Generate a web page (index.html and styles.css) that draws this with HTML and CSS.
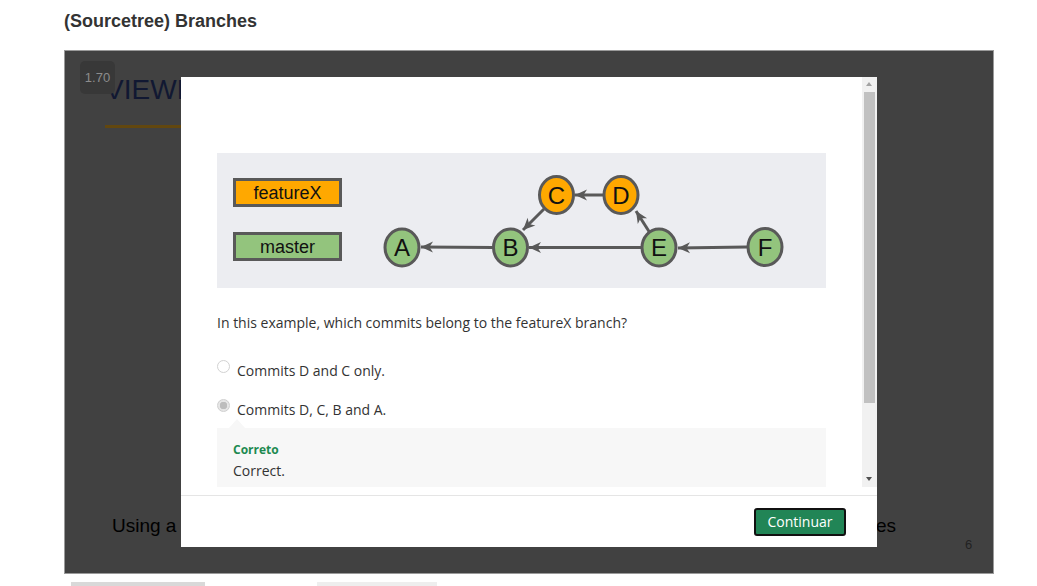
FILE: index.html
```html
<!DOCTYPE html>
<html>
<head>
<meta charset="utf-8">
<link rel="stylesheet" href="styles.css">
</head>
<body>
<div class="page">
  <h1 class="title">(Sourcetree) Branches</h1>
  <div class="frame">
    <div class="slide">
      <div class="badge">1.70</div>
      <div class="slide-title">VIEWING BRANCHES</div>
      <div class="slide-rule"></div>
      <div class="slide-text-left">Using a commit graph to view branches</div>
      <div class="slide-text-right">es</div>
      <div class="slide-num">6</div>
    </div>
    <div class="modal">
      <div class="modal-body">
        <div class="modal-content">
          <svg class="diagram" width="609" height="135" viewBox="0 0 609 135">
            <defs>
              <marker id="arr" markerUnits="userSpaceOnUse" markerWidth="14" markerHeight="12" refX="13" refY="6" orient="auto">
                <path d="M1,0.5 L13,6 L1,11.5 L4.5,6 Z" fill="#595959"/>
              </marker>
            </defs>
            <rect x="0" y="0" width="609" height="135" fill="#ecedf1"/>
            <rect x="17.5" y="26.5" width="106" height="26" fill="#ffa800" stroke="#595959" stroke-width="3"/>
            <text x="70.5" y="46" class="lbl">featureX</text>
            <rect x="17.5" y="80.5" width="106" height="26" fill="#93c47d" stroke="#595959" stroke-width="3"/>
            <text x="70.5" y="100" class="lbl">master</text>
            <g stroke="#595959" stroke-width="3" fill="none">
              <line x1="276" y1="94.5" x2="204" y2="94" marker-end="url(#arr)"/>
              <line x1="424" y1="94.5" x2="312" y2="94.5" marker-end="url(#arr)"/>
              <line x1="530" y1="94" x2="461" y2="95" marker-end="url(#arr)"/>
              <line x1="386" y1="42" x2="358" y2="42" marker-end="url(#arr)"/>
              <line x1="327" y1="56" x2="306" y2="77" marker-end="url(#arr)"/>
              <line x1="433" y1="80" x2="419" y2="58" marker-end="url(#arr)"/>
            </g>
            <g stroke="#595959" stroke-width="3">
              <ellipse cx="185" cy="94.5" rx="17" ry="18.5" fill="#93c47d"/>
              <ellipse cx="293.5" cy="94.5" rx="17" ry="18.5" fill="#93c47d"/>
              <ellipse cx="442" cy="94.5" rx="17" ry="18.5" fill="#93c47d"/>
              <ellipse cx="548" cy="94" rx="17" ry="18.5" fill="#93c47d"/>
              <ellipse cx="339.5" cy="42" rx="17" ry="18.5" fill="#ffa800"/>
              <ellipse cx="404" cy="42" rx="17" ry="18.5" fill="#ffa800"/>
            </g>
            <g class="node">
              <text x="185" y="103">A</text>
              <text x="293.5" y="103">B</text>
              <text x="442" y="103">E</text>
              <text x="548" y="102.5">F</text>
              <text x="339.5" y="50.5">C</text>
              <text x="404" y="50.5">D</text>
            </g>
          </svg>
          <p class="question">In this example, which commits belong to the featureX branch?</p>
          <div class="option">
            <span class="radio"></span>
            <span class="opt-text">Commits D and C only.</span>
          </div>
          <div class="option">
            <span class="radio checked"></span>
            <span class="opt-text">Commits D, C, B and A.</span>
          </div>
          <div class="feedback">
            <div class="fb-title">Correto</div>
            <div class="fb-text">Correct.</div>
          </div>
        </div>
        <div class="scrollbar">
          <div class="sb-up"></div>
          <div class="sb-thumb"></div>
          <div class="sb-space"></div>
          <div class="sb-down"></div>
        </div>
      </div>
      <div class="modal-footer">
        <button class="btn">Continuar</button>
      </div>
    </div>
  </div>
  <div class="bottom-bars">
    <div class="bar bar1"></div>
    <div class="bar bar2"></div>
  </div>
</div>
</body>
</html>
```

FILE: styles.css
```css
* { box-sizing: border-box; }
html, body { margin: 0; padding: 0; background: #fff; }
body { overflow: hidden; }
.page {
  padding: 10px 0 0 64px;
  width: 1037px;
  height: 586px;
}
.title {
  margin: 0;
  font-family: "Liberation Sans", Arial, sans-serif;
  font-weight: bold;
  font-size: 18px;
  line-height: 22px;
  color: #333;
}
.frame {
  position: relative;
  margin-top: 18px;
  width: 930px;
  height: 524px;
  border: 1px solid #9a9a9a;
  background: #414141;
  overflow: hidden;
}
.slide {
  position: absolute;
  inset: 0;
  font-family: "Liberation Sans", Arial, sans-serif;
}
.badge {
  position: absolute;
  left: 15px;
  top: 10px;
  width: 35px;
  height: 33px;
  border-radius: 5px;
  background: #383838;
  color: #8c8c8c;
  font-size: 13px;
  line-height: 33px;
  text-align: center;
  z-index: 1;
}
.slide-title {
  position: absolute;
  left: 40px;
  top: 23px;
  font-size: 28px;
  line-height: 32px;
  color: #111832;
  white-space: nowrap;
}
.slide-rule {
  position: absolute;
  left: 40px;
  top: 74px;
  width: 300px;
  height: 3px;
  background: #62470f;
}
.slide-text-left {
  position: absolute;
  left: 47px;
  top: 464px;
  font-size: 19px;
  line-height: 22px;
  color: #000;
  white-space: nowrap;
}
.slide-text-right {
  position: absolute;
  left: 811px;
  top: 464px;
  font-size: 19px;
  line-height: 22px;
  color: #000;
}
.slide-num {
  position: absolute;
  left: 900px;
  top: 486px;
  font-size: 13px;
  line-height: 16px;
  color: #222;
}
.modal {
  position: absolute;
  left: 116px;
  top: 26px;
  width: 696px;
  height: 470px;
  background: #fff;
  display: flex;
  flex-direction: column;
  font-family: "Open Sans", sans-serif;
  color: #333;
  z-index: 2;
}
.modal-body {
  display: flex;
  height: 410px;
  margin-bottom: 8px;
  overflow: hidden;
}
.modal-content {
  flex: 1;
  padding: 76px 36px 0 36px;
  overflow: hidden;
}
.diagram { display: block; }
.lbl {
  font-family: "Liberation Sans", Arial, sans-serif;
  font-size: 18px;
  text-anchor: middle;
  fill: #111;
}
.node text {
  font-family: "Liberation Sans", Arial, sans-serif;
  font-size: 24px;
  text-anchor: middle;
  fill: #111;
}
.question {
  margin: 25px 0 0 0;
  font-size: 14px;
  line-height: 20px;
}
.option {
  display: flex;
  align-items: flex-start;
  margin-top: 28px;
  height: 20px;
}
.option + .option { margin-top: 19px; }
.radio {
  width: 13px;
  height: 13px;
  border-radius: 50%;
  border: 1px solid #d2d2d2;
  background: #fff;
  margin-top: -1px;
  margin-right: 7px;
  flex: none;
}
.radio.checked {
  border-color: #cfcfcf;
  background: radial-gradient(circle, #bdbdbd 0, #bdbdbd 3.5px, #e6e6e6 4px);
}
.opt-text {
  font-size: 14px;
  line-height: 20px;
}
.feedback {
  position: relative;
  margin-top: 8px;
  background: #f7f7f7;
  padding: 12px 16px 8px 16px;
  height: 62px;
}
.feedback::before {
  content: "";
  position: absolute;
  left: 12px;
  top: -9px;
  border-left: 8px solid transparent;
  border-right: 8px solid transparent;
  border-bottom: 9px solid #f7f7f7;
}
.fb-title {
  font-size: 12px;
  font-weight: bold;
  line-height: 20px;
  color: #1d8a50;
}
.fb-text {
  font-size: 14px;
  line-height: 22px;
}
.scrollbar {
  width: 15px;
  background: #f1f1f1;
  display: flex;
  flex-direction: column;
  align-items: center;
  flex: none;
}
.sb-up {
  height: 15px;
  width: 15px;
  position: relative;
}
.sb-up::after {
  content: "";
  position: absolute;
  left: 4px;
  top: 5px;
  border-left: 3.5px solid transparent;
  border-right: 3.5px solid transparent;
  border-bottom: 4px solid #a3a3a3;
}
.sb-thumb {
  width: 11px;
  height: 311px;
  background: #c1c1c1;
}
.sb-space { flex: 1; }
.sb-down {
  height: 15px;
  width: 15px;
  position: relative;
}
.sb-down::after {
  content: "";
  position: absolute;
  left: 4px;
  top: 5px;
  border-left: 3.5px solid transparent;
  border-right: 3.5px solid transparent;
  border-top: 4px solid #505050;
}
.modal-footer {
  border-top: 1px solid #e5e5e5;
  flex: 1;
  display: flex;
  justify-content: flex-end;
  align-items: flex-start;
  padding: 12px 31px 0 0;
}
.btn {
  font-family: "Open Sans", sans-serif;
  font-size: 14px;
  line-height: 20px;
  color: #fff;
  background: #218556;
  border: 2px solid #111;
  border-radius: 3px;
  height: 28px;
  width: 92px;
  padding: 0;
}
.bottom-bars {
  display: flex;
  margin-top: 8px;
  padding-left: 7px;
}
.bar { height: 10px; }
.bar1 { width: 134px; background: #d9d9d9; }
.bar2 { width: 120px; margin-left: 112px; background: #eeeeee; }
```
